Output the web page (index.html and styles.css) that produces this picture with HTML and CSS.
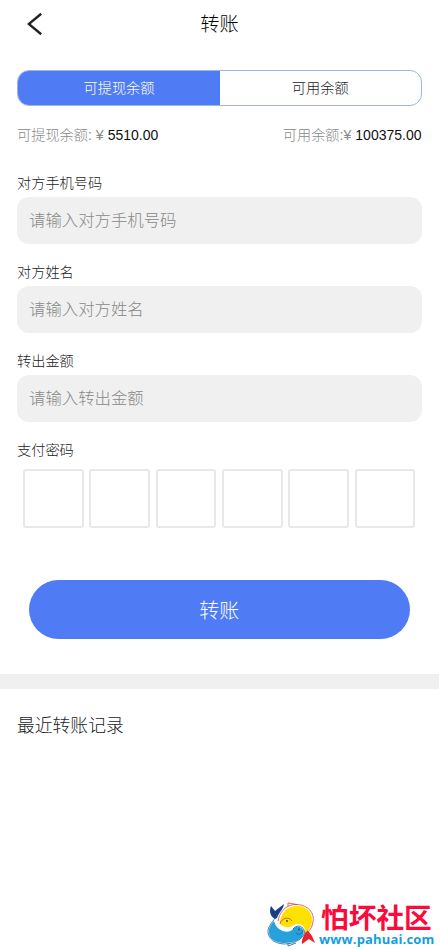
FILE: index.html
```html
<!DOCTYPE html>
<html lang="zh-CN">
<head>
<meta charset="utf-8">
<meta name="viewport" content="width=device-width, initial-scale=1">
<title>转账</title>
<link rel="stylesheet" href="styles.css">
</head>
<body>
<header class="topbar">
  <svg class="back" viewBox="0 0 16 24" aria-hidden="true"><path d="M14.2 1.8 1.8 12 14.2 22.2"/></svg>
  <h1 class="title">转账</h1>
</header>
<main class="content">
  <div class="tabs">
    <div class="tab active">可提现余额</div>
    <div class="tab">可用余额</div>
  </div>
  <div class="balances">
    <p>可提现余额: ¥ <span class="amount">5510.00</span></p>
    <p>可用余额:¥ <span class="amount">100375.00</span></p>
  </div>
  <form class="form">
    <label class="field"><span class="label">对方手机号码</span><input class="input" type="text" placeholder="请输入对方手机号码"></label>
    <label class="field"><span class="label">对方姓名</span><input class="input" type="text" placeholder="请输入对方姓名"></label>
    <label class="field"><span class="label">转出金额</span><input class="input" type="text" placeholder="请输入转出金额"></label>
    <div class="label pin-label">支付密码</div>
    <div class="pin"><i></i><i></i><i></i><i></i><i></i><i></i></div>
    <button class="submit" type="button">转账</button>
  </form>
</main>
<div class="divider"></div>
<h2 class="records">最近转账记录</h2>
<div class="brand">
  <svg class="fish" viewBox="0 0 50 45" aria-hidden="true">
    <path class="navy" d="M9 17C4 14 3 9 5 4L9 9 18 2C17 8 13 10 11 16Z"/>
    <path class="red" d="M39 26 43 30 46 34 49 41 43 37 36 42C35 37 39 33 39 30Z"/>
    <path class="yellow" d="M14 19C16 9 23 4 31 4 40 4 46 10 46 18 46 24 43 28 39 31 40 25 36 22 31 22 27 22 26 26 20 25 15 24 13 22 14 19Z"/>
    <path class="blue" d="M8 19C3 24 1 30 5 36 10 42 22 42 30 39 36 37 39 32 37 28 35 24 30 24 27 27 24 31 17 30 13 27 10 25 9 22 8 19Z"/>
    <path class="line-red" d="M12 19C14 7 23 2 31 2.500 42 3 49 11 47 20 46 26 43 29 40 32M14 22C15 16 23 14 26 19M22 4V1L31 2.500"/>
    <path class="line-blue" d="M11 13C8 19 1 24 2 31 4 40 15 44 26 41 35 38 40 33 38 28 36 23 30 23 27 27M30 31C33 34 37 31 37 28M22 41V44L30 41"/>
    <circle class="eye" cx="21" cy="19" r=".9"/><circle class="eye" cx="33" cy="27.500" r=".9"/>
  </svg>
  <div class="brand-text"><div class="brand-name">怕坏社区</div><div class="brand-url">www.pahuai.com</div></div>
</div>
</body>
</html>
```
FILE: styles.css
```css
* { box-sizing: border-box; }
body {
  margin: 0;
  height: 950px;
  display: flex;
  flex-direction: column;
  overflow: hidden;
  background: #fff;
  color: #222;
  font-family: "Liberation Sans", "Noto Sans CJK SC", sans-serif;
  font-size: 14.2px;
  font-weight: 300;
}
h1, h2, p { margin: 0; font-weight: 300; }
.topbar {
  display: grid;
  grid-template-columns: 16px 1fr 16px;
  align-items: center;
  height: 48px;
  padding: 0 28px 0 27px;
}
.back { width: 16px; height: 24px; fill: none; stroke: #222; stroke-width: 2.4; }
.title { padding-top: 2px; text-align: center; font-size: 19.2px; line-height: 28px; color: #000; }
.content { padding: 22px 18.5px 0 17px; }
.tabs {
  display: flex;
  height: 36px;
  border: 1px solid #9cb3e8;
  border-radius: 12px;
  overflow: hidden;
}
.tab { flex: 1; text-align: center; line-height: 34px; }
.tab.active { flex: 0 0 202px; background: #4f7cf4; color: #fff; }
.balances {
  display: flex;
  justify-content: space-between;
  margin-top: 19px;
  line-height: 20px;
  color: #888;
}
.amount { color: #111; font-size: 14px; font-weight: 400; }
.form { margin-top: 28px; }
.field { display: block; height: 89px; }
.label { display: block; line-height: 20px; height: 24px; }
.input {
  display: block;
  width: 100%;
  height: 47px;
  padding: 0 12px;
  border: 0;
  border-radius: 12px;
  background: #f0f0f0;
  font: inherit;
  font-size: 16.4px;
}
.input::placeholder { color: #888; opacity: 1; }
.pin-label { height: 29px; }
.pin { display: grid; grid-template-columns: repeat(6, 1fr); gap: 5.6px; padding: 0 6px; }
.pin i { height: 59px; border: 2px solid #e8e8e8; border-radius: 3px; }
.submit {
  display: block;
  width: calc(100% - 24px);
  height: 59px;
  margin: 52px 12px 0;
  padding: 0;
  border: 0;
  border-radius: 30px;
  background: #4f7cf4;
  color: #fff;
  font: inherit;
  font-size: 20px;
}
.divider { width: 439px; height: 15px; margin-top: 35px; background: #f0f0f0; }
.records { margin: 23px 0 0 17px; font-size: 17.8px; line-height: 28px; }
.brand { display: flex; width: 174px; height: 49px; margin: auto 0 0 auto; }
.fish { width: 50px; height: 45px; margin-top: 1px; flex: none; }
.navy { fill: #173d86; }
.red { fill: #e9202d; }
.yellow { fill: #ffe100; }
.blue { fill: #27a1dc; }
.line-red { fill: none; stroke: #e23b36; stroke-width: .8; }
.line-blue { fill: none; stroke: #175f9c; stroke-width: .8; }
.eye { fill: #174b77; }
.brand-text { margin-left: 3px; white-space: nowrap; }
.brand-name {
  margin-left: 2px;
  color: #fb0b3b;
  font-family: "Noto Sans CJK SC", sans-serif;
  font-weight: 700;
  font-size: 27.7px;
  line-height: 31px;
}
.brand-url {
  color: #159ddd;
  font-family: "Open Sans", sans-serif;
  font-weight: 700;
  font-size: 13px;
  line-height: 15px;
  letter-spacing: .15px;
}
```
